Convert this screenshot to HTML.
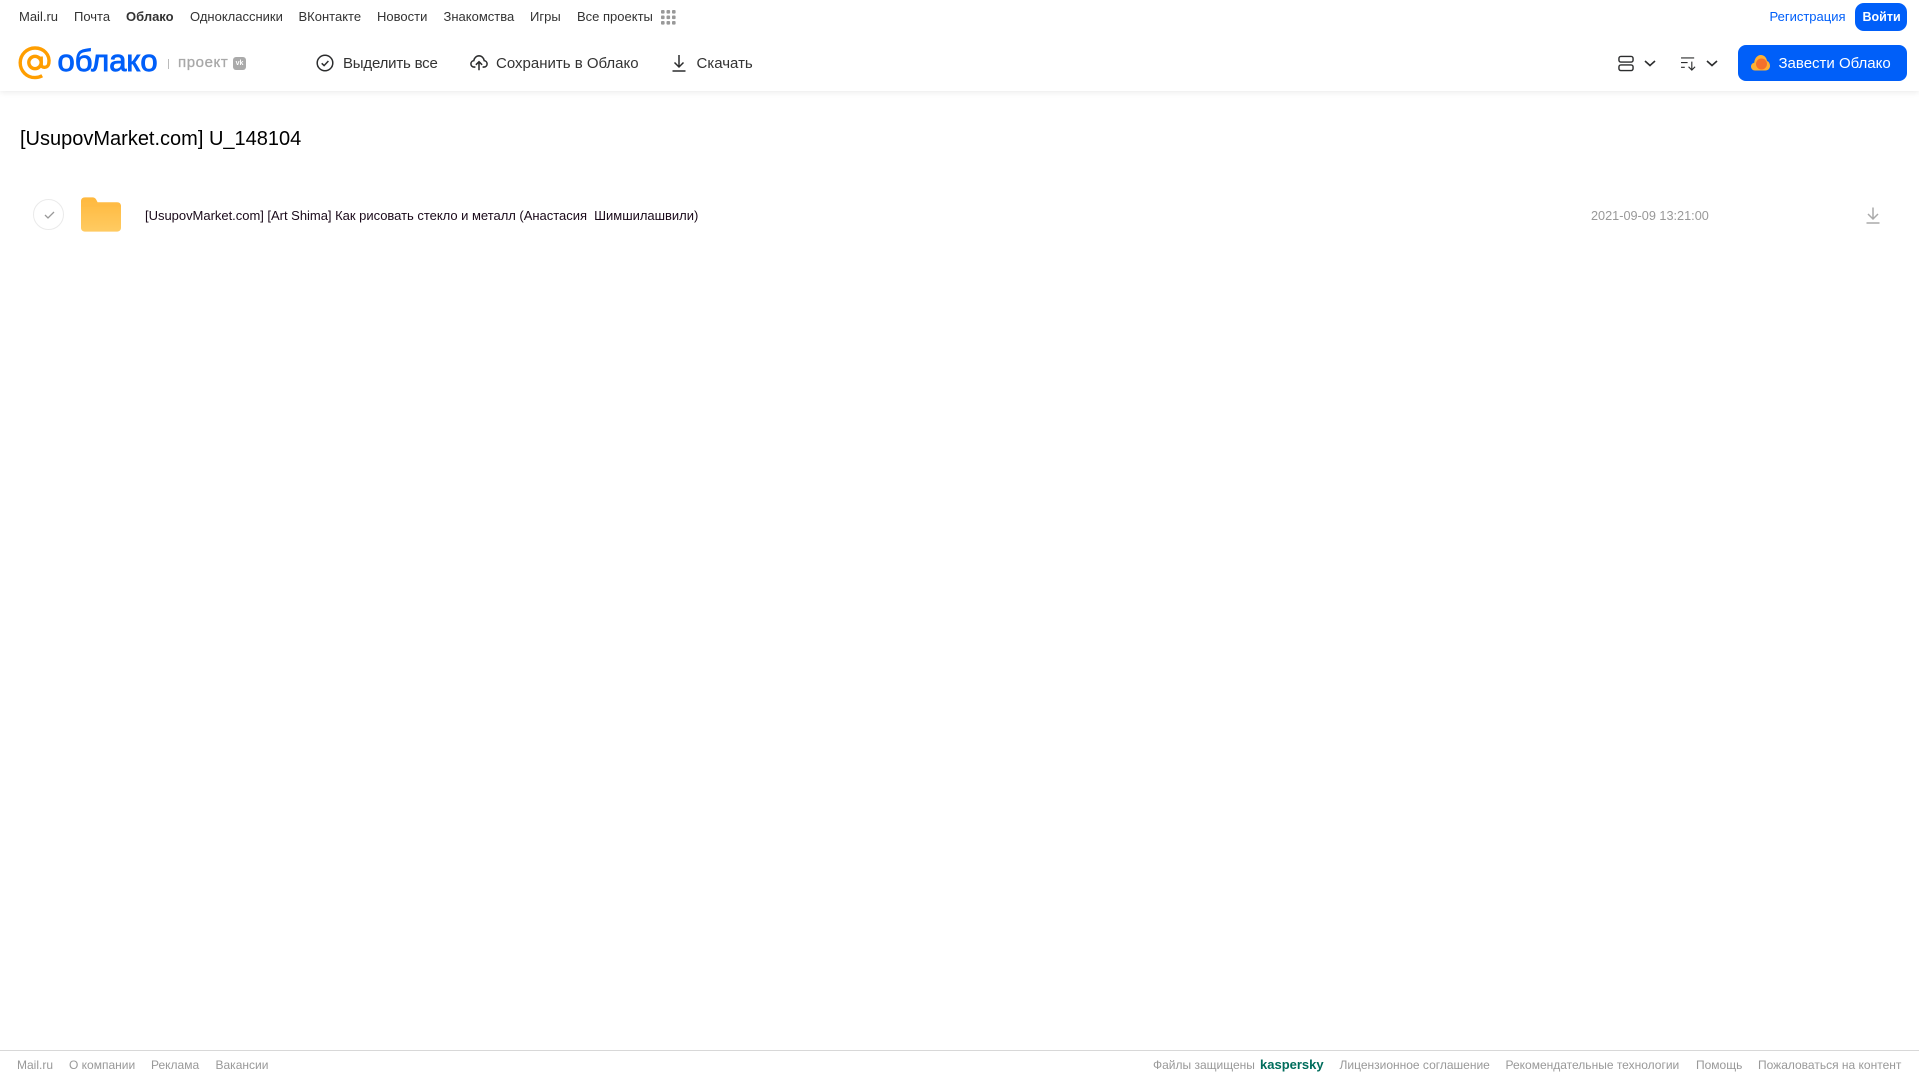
<!DOCTYPE html>
<html lang="ru"><head><meta charset="utf-8"><title>[UsupovMarket.com] U_148104</title>
<style>
html,body{margin:0;padding:0;background:#fff}
body{position:relative;width:1919px;height:1079px;overflow:hidden;font-family:"Liberation Sans",sans-serif}
.t{position:absolute;white-space:pre;line-height:20px;height:20px;transform-origin:0 50%}
.n{font-size:13px;color:#333;top:7px}
.a{font-size:15px;color:#333;top:53.500px}
.f{font-size:12px;color:#999;top:1055px}
svg{position:absolute;overflow:visible}
#hdr{position:absolute;left:0;top:0;width:1919px;height:91px;background:#fff;box-shadow:0 1px 6px rgba(0,0,0,.09)}
.btn{position:absolute;background:#005ff9}
</style></head><body>
<div id="hdr"></div>
<div class="t n" style="left:19px">Mail.ru</div>
<div class="t n" style="left:74px">Почта</div>
<div class="t n" style="left:126px;font-weight:bold">Облако</div>
<div class="t n" style="left:190px">Одноклассники</div>
<div class="t n" style="left:298.500px">ВКонтакте</div>
<div class="t n" style="left:377px">Новости</div>
<div class="t n" style="left:443.500px">Знакомства</div>
<div class="t n" style="left:530px">Игры</div>
<div class="t n" style="left:577px">Все проекты</div>
<svg style="left:661px;top:10px" width="15" height="15" fill="#999"><rect x="0" y="0" width="3.600" height="3.600" rx="1"/><rect x="5.500" y="0" width="3.600" height="3.600" rx="1"/><rect x="11" y="0" width="3.600" height="3.600" rx="1"/><rect x="0" y="5.500" width="3.600" height="3.600" rx="1"/><rect x="5.500" y="5.500" width="3.600" height="3.600" rx="1"/><rect x="11" y="5.500" width="3.600" height="3.600" rx="1"/><rect x="0" y="11" width="3.600" height="3.600" rx="1"/><rect x="5.500" y="11" width="3.600" height="3.600" rx="1"/><rect x="11" y="11" width="3.600" height="3.600" rx="1"/></svg>
<div class="t n" style="left:1769.500px;color:#005ff9">Регистрация</div>
<div class="btn" style="left:1855px;top:3px;width:52px;height:28px;border-radius:9px"></div>
<div class="t n" style="left:1862.500px;color:#fff;font-weight:bold;font-size:12.500px">Войти</div>

<svg style="left:18px;top:46px" width="34" height="34" viewBox="0 0 34 34" fill="none" stroke="#ff9e00" stroke-width="3.400"><circle cx="17" cy="16.500" r="6.200"/><path d="M23.200 10.500v7.800c0 4.200 6.700 4.200 7.600-.8C32.300 8.500 25.500 2 17 2 8.800 2 2.200 8.700 2.200 16.800 2.200 25 8.800 31.600 17 31.600c2.600 0 5-.6 7.200-1.800"/></svg>
<div class="t" style="left:57.500px;top:46px;height:30px;line-height:30px;font-size:31px;color:#005ff9;-webkit-text-stroke:.9px #005ff9">облако</div>
<div style="position:absolute;left:168px;top:59px;width:1px;height:10px;background:#bbb"></div>
<div class="t" style="left:178px;top:53px;font-size:15px;color:#a8a8a8;letter-spacing:.6px;-webkit-text-stroke:.3px #a8a8a8">проект</div>
<div style="position:absolute;left:233px;top:57px;width:13px;height:13px;border-radius:3px;background:#aaa;color:#fff;font:bold 7px/13px 'Liberation Sans',sans-serif;text-align:center">vk</div>

<svg style="left:316px;top:54px" width="18" height="18" viewBox="0 0 18 18" fill="none" stroke="#2c2d2e" stroke-width="1.500"><circle cx="9" cy="9" r="7.800"/><path d="M5.700 9.300l2.400 2.300 4.300-4.600"/></svg>
<div class="t a" style="left:343px;letter-spacing:-.2px">Выделить все</div>
<svg style="left:470px;top:54px" width="18" height="18" viewBox="0 0 20 18" fill="none" stroke="#2c2d2e" stroke-width="1.700"><path d="M6 13.500H4.700C2.600 13.500 1 12 1 10c0-1.900 1.400-3.400 3.200-3.600C4.700 3.300 7.100 1 10 1c2.900 0 5.300 2.300 5.800 5.400C17.600 6.600 19 8.100 19 10c0 2-1.600 3.500-3.700 3.500H14"/><path d="M10 17V8M6.500 11L10 7.600 13.500 11"/></svg>
<div class="t a" style="left:496px">Сохранить в Облако</div>
<svg style="left:672px;top:54px" width="14" height="18" viewBox="0 0 14 18" fill="none" stroke="#2c2d2e" stroke-width="1.500"><path d="M7 1v12M2.500 8.500L7 13l4.500-4.500M.5 17h13"/></svg>
<div class="t a" style="left:696.500px">Скачать</div>

<svg style="left:1618px;top:55px" width="16" height="17" viewBox="0 0 17 17" fill="none" stroke="#2c2d2e" stroke-width="1.500"><rect x="1" y="1" width="15" height="6" rx="2"/><rect x="1" y="10" width="15" height="6" rx="2"/></svg>
<svg style="left:1644px;top:60px" width="12" height="7" viewBox="0 0 12 7" fill="none" stroke="#2c2d2e" stroke-width="1.600"><path d="M1 1l5 4.500L11 1"/></svg>
<svg style="left:1681px;top:56px" width="16" height="15" viewBox="0 0 17 16" fill="none" stroke="#2c2d2e" stroke-width="1.200"><path d="M0 2h14M0 7h7M0 12h4M11.500 6v9M8 11.500l3.500 3.500 3.500-3.500"/></svg>
<svg style="left:1706px;top:60px" width="12" height="7" viewBox="0 0 12 7" fill="none" stroke="#2c2d2e" stroke-width="1.600"><path d="M1 1l5 4.500L11 1"/></svg>
<div class="btn" style="left:1738px;top:45px;width:169px;height:36px;border-radius:8px"></div>
<svg style="left:1751px;top:55px" width="19" height="16" viewBox="0 0 19 16"><path d="M4 15.500C1.800 15.500 0 13.800 0 11.500 0 9.500 1.400 8 3.200 7.700 3.600 3.500 6.200 0 9.800 0c3.400 0 5.800 2.700 6.200 6 1.800.5 3 2.500 3 5 0 2.500-2 4.500-4.500 4.500z" fill="#ffb031"/><circle cx="10.500" cy="9" r="5.500" fill="#f4702c"/></svg>
<div class="t a" style="left:1778.500px;color:#fff">Завести Облако</div>

<div class="t" style="left:20px;top:124.500px;height:28px;line-height:28px;font-size:20px;color:#000">[UsupovMarket.com] U_148104</div>
<div style="position:absolute;left:33px;top:199px;width:31px;height:31px;border:1px solid #eaeaea;border-radius:50%;box-sizing:border-box"></div>
<svg style="left:44px;top:211px" width="11" height="8" viewBox="0 0 11 8" fill="none" stroke="#999" stroke-width="1.300"><path d="M1 4l3 3 6-6"/></svg>
<svg style="left:81px;top:197px" width="40" height="35" viewBox="0 0 41 35"><defs><linearGradient id="g" x1="0" y1="0" x2="0" y2="1"><stop offset="0" stop-color="#ffb83d"/><stop offset="1" stop-color="#ffcb62"/></linearGradient></defs><path d="M0 4C0 1.500 1.500 0 4 0h7c3 0 4 1 5 3l1 2h20c2.500 0 4 1.500 4 4v22c0 2.500-1.500 4-4 4H4c-2.500 0-4-1.500-4-4z" fill="url(#g)"/><path d="M0 9.500c0-2 1.500-3 4-3h33c2.500 0 4 1 4 3H0z" fill="#ffbb45"/></svg>
<div class="t" style="left:145px;top:205.500px;font-size:13px;color:#1a0a1a;letter-spacing:-.02px">[UsupovMarket.com] [Art Shima] Как рисовать стекло и металл (Анастасия  Шимшилашвили)</div>
<div class="t" style="left:1591px;top:205.500px;font-size:12.700px;color:#999">2021-09-09 13:21:00</div>
<svg style="left:1866px;top:207px" width="14" height="17" viewBox="0 0 14 17" fill="none" stroke="#aaa" stroke-width="1.500"><path d="M7 .5v11M2 7l5 5 5-5M.5 16h13"/></svg>

<div style="position:absolute;left:0;top:1050px;width:1919px;height:1px;background:#d8d8d8"></div>
<div class="t f" style="left:17px">Mail.ru</div>
<div class="t f" style="left:69px">О компании</div>
<div class="t f" style="left:151px">Реклама</div>
<div class="t f" style="left:215.500px">Вакансии</div>
<div class="t f" style="left:1153px">Файлы защищены</div>
<div class="t f" style="left:1260px;font-size:13px;font-weight:bold;color:#006d5c">kaspersky</div>
<div class="t f" style="left:1339.500px">Лицензионное соглашение</div>
<div class="t f" style="left:1505.500px">Рекомендательные технологии</div>
<div class="t f" style="left:1696px">Помощь</div>
<div class="t f" style="left:1758px">Пожаловаться на контент</div>
</body></html>
